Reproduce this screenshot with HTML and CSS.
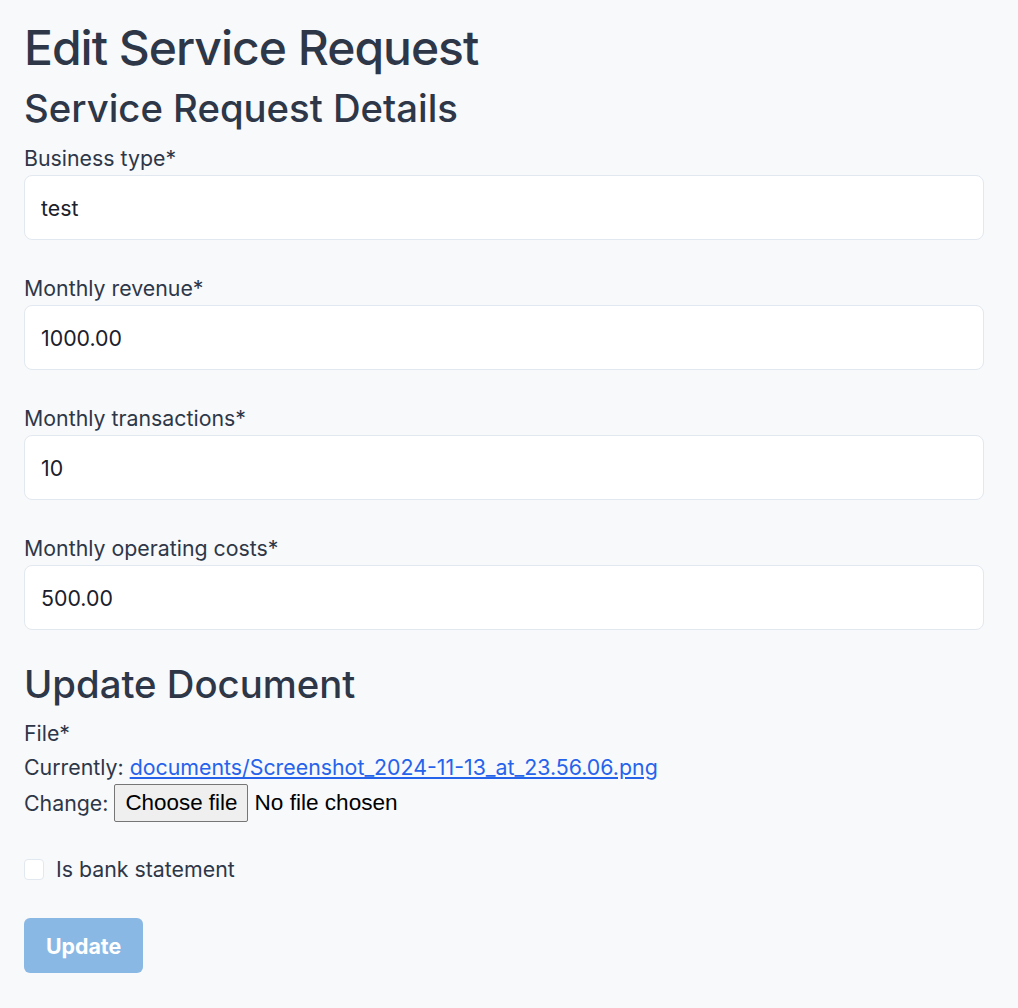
FILE: index.html
```html
<!DOCTYPE html>
<html lang="en">
<head>
<meta charset="utf-8">
<title>Edit Service Request</title>
<link rel="stylesheet" href="styles.css">
</head>
<body>
<main class="page">
  <h1 class="title">Edit Service Request</h1>
  <form class="form">
    <h2 class="section-title">Service Request Details</h2>
    <div class="field">
      <label class="label" for="bt">Business type*</label>
      <input class="input" id="bt" type="text" value="test">
    </div>
    <div class="field">
      <label class="label" for="mr">Monthly revenue*</label>
      <input class="input" id="mr" type="text" value="1000.00">
    </div>
    <div class="field">
      <label class="label" for="mt">Monthly transactions*</label>
      <input class="input" id="mt" type="text" value="10">
    </div>
    <div class="field">
      <label class="label" for="mc">Monthly operating costs*</label>
      <input class="input" id="mc" type="text" value="500.00">
    </div>

    <h2 class="section-title doc-title">Update Document</h2>
    <div class="file-block">
      <div class="file-line">File*</div>
      <div class="file-line">Currently: <a class="link" href="#">documents/Screenshot_2024-11-13_at_23.56.06.png</a></div>
      <div class="file-line change">Change: <span class="choose">Choose file</span><span class="nofile">No file chosen</span></div>
    </div>

    <label class="check-row">
      <span class="checkbox"></span>
      <span class="check-label">Is bank statement</span>
    </label>

    <button class="btn" type="button">Update</button>
  </form>
</main>
</body>
</html>
```

FILE: styles.css
```css
* { box-sizing: border-box; }
html, body { margin: 0; padding: 0; }
body {
  background: #f8f9fb;
  font-family: Inter, "Noto Sans", sans-serif;
  color: #2d3748;
}
.page {
  padding: 20px 24px 24px;
}
.title {
  margin: 0;
  font-size: 48px;
  font-weight: 500;
  line-height: 56px;
  letter-spacing: -1px;
}
.section-title {
  margin: 10px 0 0;
  font-size: 38.3px;
  font-weight: 500;
  line-height: 44px;
  letter-spacing: 0;
}
.form { display: flex; flex-direction: column; }
.field {
  display: flex;
  flex-direction: column;
  margin-bottom: 35px;
}
.section-title + .field { margin-top: 15px; }
.label {
  font-size: 21.33px;
  line-height: 26px;
  margin-bottom: 4px;
}
.input {
  width: 960px;
  height: 65px;
  border: 1px solid #e2e8f0;
  border-radius: 8px;
  background: #fff;
  padding: 0 16px;
  font-family: Inter, sans-serif;
  font-size: 21.33px;
  color: #1a202c;
  outline: none;
}
.doc-title { margin-top: -3px; }
.file-block {
  font-size: 21.33px;
  line-height: 34px;
  margin-top: 10px;
}
.link { color: #2563eb; text-decoration: underline; }
.change {
  display: flex;
  align-items: center;
  gap: 6px;
  height: 38px;
}
.choose {
  font-family: "Liberation Sans", Arial, sans-serif;
  font-size: 22.4px;
  color: #000;
  background: #efefef;
  border: 1px solid #767676;
  border-radius: 2px;
  padding: 0 10px;
  line-height: 36px;
}
.nofile {
  font-family: "Liberation Sans", Arial, sans-serif;
  font-size: 22.6px;
  color: #000;
}
.check-row {
  display: flex;
  align-items: center;
  gap: 12px;
  margin-top: 34px;
  font-size: 21.33px;
  line-height: 26px;
}
.checkbox {
  width: 20px;
  height: 21px;
  background: #fff;
  border: 1px solid #e2e8f0;
  border-radius: 4px;
}
.btn {
  align-self: flex-start;
  margin-top: 36px;
  width: 119px;
  height: 55px;
  border: none;
  border-radius: 6px;
  background: #8ab8e4;
  color: #fff;
  font-family: Inter, sans-serif;
  font-size: 21.33px;
  font-weight: 700;
}
```
